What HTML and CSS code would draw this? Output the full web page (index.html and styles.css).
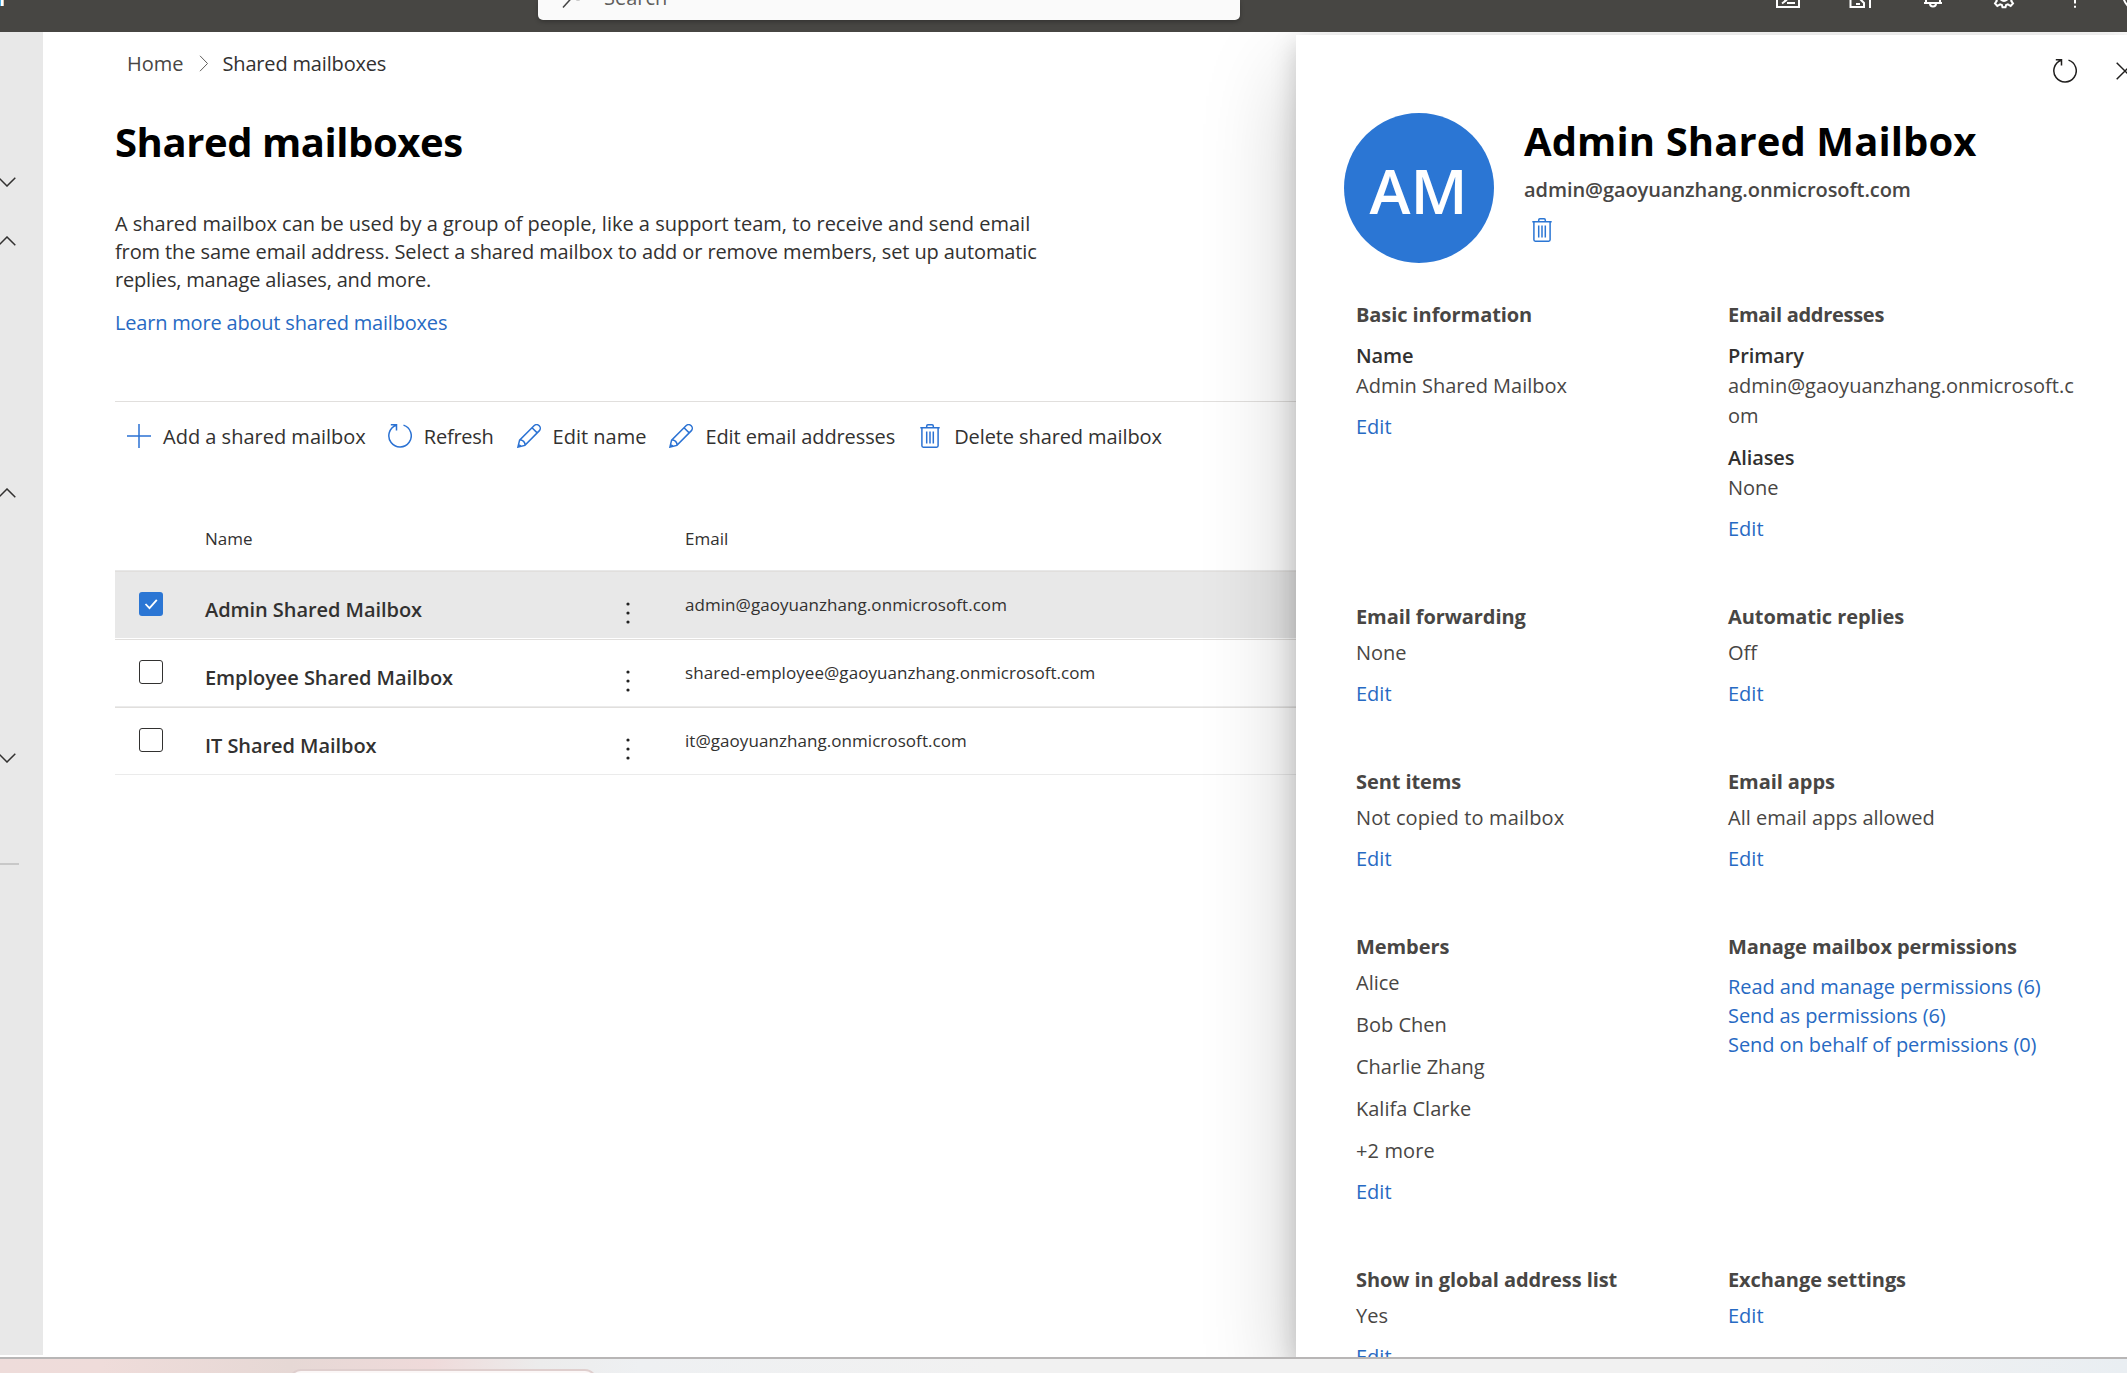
FILE: index.html
```html
<!DOCTYPE html>
<html lang="en">
<head>
<meta charset="utf-8">
<title>Shared mailboxes</title>
<link rel="stylesheet" href="styles.css">
</head>
<body>
<svg class="sprite" aria-hidden="true">
  <symbol id="refresh" viewBox="0 0 24 24"><path d="M15.500 1.100a11.200 11.200 0 1 1-7.200.1M2.800.8h5.700v5.700" /></symbol>
  <symbol id="pencil" viewBox="0 0 24 24"><path d="M.9 23.100l1.700-7L17 1.700a3.600 3.600 0 0 1 5.200 5.200L7.900 21.400zM2.600 16.100a4.600 4.600 0 0 1 5.300 5.300M15 3.700l5.200 5.200M1.600 20.200l2.200 2.200"/></symbol>
  <symbol id="trash" viewBox="0 0 20 24"><path d="M.3 3.700h19.400M1.900 3.700v18.100q0 1.400 1.400 1.400h13.400q1.400 0 1.400-1.400V3.700M6.700 3.700V2q0-1.200 1.200-1.200h4.200q1.200 0 1.200 1.200v1.700M6.700 7.500v12M10 7.500v12M13.300 7.500v12"/></symbol>
  <symbol id="chevron" viewBox="0 0 18 10"><path d="M.7.7L9 9 17.300.7"/></symbol>
  <symbol id="more" viewBox="0 0 4 24"><circle cx="2" cy="3" r="1.600"/><circle cx="2" cy="12" r="1.600"/><circle cx="2" cy="21" r="1.600"/></symbol>
</svg>
<div class="screen">
  <header class="topbar">
    <span class="brand"></span>
    <div class="search">
      <svg class="search-icon" viewBox="0 0 24 24"><circle cx="16" cy="7.500" r="8"/><path d="M10.400 13.100L1 23.500"/></svg>
      <span class="search-text">Search</span>
    </div>
    <div class="top-icons">
      <svg viewBox="0 0 24 24"><path d="M1 3v20h22V3M5 12.500l5 4-4 3M11 19h8"/></svg>
      <svg viewBox="0 0 24 24"><path d="M2.500 3v20h13.500v-4l-4-4 3-4M22 3v21M8 20h4"/></svg>
      <svg viewBox="0 0 24 24"><path d="M6 19V9a7 7 0 0 1 14 0v10M4 19h18M10 19.500a3 3 0 0 0 6 0"/></svg>
      <svg viewBox="0 0 24 24"><path d="M1 11v3.200l3 .6.8 2L3 19.500 5.300 22l2.800-1.700 1.800.7.600 2.300h3l.6-2.300 1.800-.7 2.800 1.700 2.300-2.500-1.800-2.700.8-2 3-.6V11"/><circle cx="12" cy="13" r="4"/></svg>
      <svg viewBox="0 0 24 24"><path d="M6 6a5 5 0 1 1 7 5q-2 1-2 4v4.500M11 21.800v2"/></svg>
      <svg viewBox="0 0 24 24"><circle cx="4" cy="10" r="17"/></svg>
    </div>
  </header>

  <div class="workspace">
    <nav class="rail">
      <svg class="rail-chevron c1"><use href="#chevron"/></svg>
      <svg class="rail-chevron c2 up"><use href="#chevron"/></svg>
      <svg class="rail-chevron c3 up"><use href="#chevron"/></svg>
      <svg class="rail-chevron c4"><use href="#chevron"/></svg>
      <hr class="rail-rule">
    </nav>

    <main class="content">
      <div class="crumbs">
        <a>Home</a>
        <svg class="crumb-sep" viewBox="0 0 10 17"><path d="M1 .8l7.500 7.700L1 16.200"/></svg>
        <span class="crumb-here">Shared mailboxes</span>
      </div>
      <h1 class="title">Shared mailboxes</h1>
      <p class="intro">
        <span class="l1">A shared mailbox can be used by a group of people, like a support team, to receive and send email</span>
        <span class="l2">from the same email address. Select a shared mailbox to add or remove members, set up automatic</span>
        <span class="l3">replies, manage aliases, and more.</span>
      </p>
      <a class="learn">Learn more about shared mailboxes</a>

      <div class="toolbar">
        <div class="tool add"><svg class="ico24" viewBox="0 0 24 24"><path d="M12 0v24M0 12h24"/></svg><span>Add a shared mailbox</span></div>
        <div class="tool reload"><svg class="ico24"><use href="#refresh"/></svg><span>Refresh</span></div>
        <div class="tool"><svg class="ico24"><use href="#pencil"/></svg><span>Edit name</span></div>
        <div class="tool"><svg class="ico24"><use href="#pencil"/></svg><span class="tight">Edit email addresses</span></div>
        <div class="tool"><svg class="ico24"><use href="#trash"/></svg><span class="tight">Delete shared mailbox</span></div>
      </div>

      <div class="grid-head"><span class="h-name">Name</span><span class="h-email">Email</span></div>
      <div class="row selected">
        <span class="check on"><svg viewBox="0 0 24 24"><path d="M6.500 12l4 4.200 7.300-8.400"/></svg></span>
        <span class="name">Admin Shared Mailbox</span>
        <svg class="more"><use href="#more"/></svg>
        <span class="mail">admin@gaoyuanzhang.onmicrosoft.com</span>
      </div>
      <div class="row after-selected">
        <span class="check"></span>
        <span class="name">Employee Shared Mailbox</span>
        <svg class="more"><use href="#more"/></svg>
        <span class="mail">shared-employee@gaoyuanzhang.onmicrosoft.com</span>
      </div>
      <div class="row last">
        <span class="check"></span>
        <span class="name">IT Shared Mailbox</span>
        <svg class="more"><use href="#more"/></svg>
        <span class="mail">it@gaoyuanzhang.onmicrosoft.com</span>
      </div>
    </main>

    <aside class="panel">
      <div class="panel-actions">
        <svg class="ico24"><use href="#refresh"/></svg>
        <svg class="close" viewBox="0 0 18 18"><path d="M.7.7l16.600 16.600M17.300.7L.7 17.300"/></svg>
      </div>
      <div class="persona">
        <div class="avatar"><span>AM</span></div>
        <div class="persona-text">
          <h2 class="persona-name">Admin Shared Mailbox</h2>
          <div class="persona-mail">admin@gaoyuanzhang.onmicrosoft.com</div>
          <svg class="ico20 persona-trash"><use href="#trash"/></svg>
        </div>
      </div>
      <div class="details">
        <section>
          <h3>Basic information</h3>
          <h4>Name</h4>
          <p class="under">Admin Shared Mailbox</p>
          <a>Edit</a>
        </section>
        <section>
          <h3 class="narrow">Email addresses</h3>
          <h4>Primary</h4>
          <p class="under">admin@gaoyuanzhang.onmicrosoft.c<br>om</p>
          <h4>Aliases</h4>
          <p class="under">None</p>
          <a>Edit</a>
        </section>
        <section><h3>Email forwarding</h3><p>None</p><a>Edit</a></section>
        <section><h3>Automatic replies</h3><p>Off</p><a>Edit</a></section>
        <section><h3>Sent items</h3><p class="wide">Not copied to mailbox</p><a>Edit</a></section>
        <section><h3>Email apps</h3><p>All email apps allowed</p><a>Edit</a></section>
        <section>
          <h3>Members</h3>
          <p>Alice</p><p>Bob Chen</p><p>Charlie Zhang</p><p>Kalifa Clarke</p><p class="wide">+2 more</p>
          <a>Edit</a>
        </section>
        <section>
          <h3>Manage mailbox permissions</h3>
          <div class="links"><a>Read and manage permissions (6)</a><a>Send as permissions (6)</a><a>Send on behalf of permissions (0)</a></div>
        </section>
        <section><h3>Show in global address list</h3><p>Yes</p><a>Edit</a></section>
        <section><h3>Exchange settings</h3><a class="direct">Edit</a></section>
      </div>
    </aside>
  </div>
  <footer class="taskbar"><div class="task-search"></div></footer>
</div>
</body>
</html>
```

FILE: styles.css
```css
* { box-sizing: border-box; }
body { margin: 0; font-family: "Open Sans", "Noto Sans", sans-serif; font-size: 20px; line-height: 28px; color: #323130; background: #fff; }
h1, h2, h3, h4, p { margin: 0; }
svg { fill: none; stroke: currentColor; stroke-width: 1.5; overflow: visible; display: block; flex: none; }
.sprite { width: 0; height: 0; position: absolute; }
.screen { width: 2127px; height: 1373px; display: flex; flex-direction: column; overflow: hidden; }
a { color: #276ac3; white-space: nowrap; }
.ico24 { width: 24px; height: 24px; }
.ico20 { width: 20px; height: 24px; }

.topbar { height: 32px; flex: none; background: #474643; display: flex; position: relative; z-index: 3; color: #fff; overflow: hidden; }
.brand { flex: none; width: 4px; height: 6px; margin-right: 534px; background: linear-gradient(90deg, #4aaee8 1px, #fff 1px, #fff 3px, #e0c4a8 3px); }
.search { flex: none; width: 702px; height: 20px; background: #fafafa; border-radius: 0 0 5px 5px; display: flex; align-items: flex-end; color: #605e5c; box-shadow: 0 2px 4px rgba(0,0,0,.25); overflow: hidden; }
.search-icon { width: 24px; height: 24px; margin: 0 18px 12px 24px; color: #444; }
.search-text { line-height: 28px; margin: 0 0 8px; }
.top-icons { display: flex; flex: none; gap: 48px; margin: -16px 0 0 536px; }
.top-icons svg { width: 24px; height: 24px; stroke-width: 2; }

.workspace { height: 1325px; flex: none; display: flex; overflow: hidden; }
.rail { width: 43px; height: 1323px; flex: none; background: #e8e8e8; display: flex; flex-direction: column; color: #323130; }
.rail-chevron { width: 18px; height: 10px; margin-left: -2px; }
.rail-chevron.up { transform: rotate(180deg); }
.c1 { margin-top: 145px; }
.c2 { margin-top: 49px; }
.c3 { margin-top: 242px; }
.c4 { margin-top: 255px; }
.rail-rule { width: 19px; height: 2px; margin: 100px 0 0; border: 0; background: #c8c8c8; }

.content { width: 1253px; flex: none; padding-left: 72px; }
.crumbs { display: flex; align-items: center; height: 28px; margin: 18px 0 0 12px; }
.crumbs a { color: #484644; }
.crumb-here { letter-spacing: -.17px; }
.crumb-sep { width: 10px; height: 17px; margin: 0 14px 2px 15px; stroke-width: 1; color: #605e5c; }
.title { font-size: 40px; line-height: 54px; font-weight: 700; color: #000; margin-top: 37px; letter-spacing: -.43px; }
.intro { margin-top: 41px; }
.intro span { display: block; white-space: nowrap; }
.intro .l1 { letter-spacing: -.01px; }
.intro .l2 { letter-spacing: -.11px; }
.intro .l3 { letter-spacing: -.18px; }
.learn { display: block; margin-top: 15px; letter-spacing: -.19px; }

.toolbar { height: 68px; margin-top: 64px; padding-left: 12px; border-top: 1px solid #e1dfdd; display: flex; align-items: center; gap: 23px; }
.tool { display: flex; align-items: center; color: #2b72d3; white-space: nowrap; }
.tool span { color: #323130; margin: 2px 0 0 12px; }
.tool.add span { margin-right: -1px; }
.tool.reload span { letter-spacing: -.25px; }
.tool .tight { letter-spacing: -.1px; }
.grid-head { height: 101px; padding-top: 56px; display: flex; font-size: 17px; }
.h-name { margin-left: 90px; width: 480px; }
.row { height: 68px; border-top: 1px solid #ebebeb; box-shadow: inset 0 1px #e1dfdd; display: flex; }
.row.selected { background: #e8e8e8; border-color: #e8e8e8; }
.row.after-selected { border-color: #fff; }
.row.last { height: 69px; border-bottom: 1px solid #ebebeb; }
.check { width: 24px; height: 24px; margin: 21px 0 0 24px; border: 1.5px solid #323130; border-radius: 3px; flex: none; }
.check.on { background: #2b76d4; border: 0; color: #fff; }
.check svg { stroke-width: 1.8; }
.name { width: 421px; margin: 25px 0 0 42px; font-weight: 600; letter-spacing: -.06px; }
.more { width: 4px; height: 24px; margin-top: 30px; fill: #222; stroke: none; }
.mail { margin: 20px 0 0 55px; font-size: 17px; letter-spacing: .06px; }

.panel { flex: 1; min-width: 0; margin-top: 3px; background: #fff; position: relative; z-index: 2; box-shadow: 0 38px 86px rgba(0,0,0,.22), 0 8px 24px rgba(0,0,0,.18); overflow: hidden; color: #484644; }
.panel-actions { display: flex; height: 48px; padding-top: 24px; align-items: center; margin-left: 757px; gap: 39px; color: #201f1e; }
.close { width: 18px; height: 18px; }
.persona { display: flex; margin: 30px 0 0 48px; height: 150px; }
.avatar { width: 150px; height: 150px; border-radius: 50%; background: #2b76d4; color: #fff; font-size: 62px; font-weight: 600; line-height: 155px; text-align: center; flex: none; }
.avatar span { margin-right: 1px; }
.persona-text { margin-left: 30px; padding-top: 1px; }
.persona-name { font-size: 40px; line-height: 54px; color: #000; white-space: nowrap; letter-spacing: .1px; }
.persona-mail { font-weight: 600; margin-top: 8px; letter-spacing: -.07px; }
.persona-trash { color: #2b76d4; margin: 14px 0 0 8px; }
.details { display: grid; grid-template-columns: 372px 380px; row-gap: 58px; margin: 37px 0 0 60px; }
h3, h4 { font-size: 20px; line-height: 30px; font-weight: 700; color: #484644; white-space: nowrap; letter-spacing: -.08px; }
h3.narrow { letter-spacing: -.28px; }
h4 { font-weight: 600; color: #323130; padding-top: 11px; }
p + h4 { padding-top: 12px; }
.details p, .details a { display: block; line-height: 30px; white-space: nowrap; }
.details p { padding: 6px 0; }
.details p.wide { letter-spacing: .12px; }
.details p.under { padding: 0; }
.details p + a { padding-top: 5px; }
.details p.under + a { padding-top: 11px; }
.details a.direct { padding-top: 6px; }
.links { padding-top: 10px; letter-spacing: -.07px; }
.details .links a { line-height: 29px; }

.taskbar { height: 16px; border-top: 2px solid #b8b6b6; background: linear-gradient(90deg, #eedcda 0, #efdcda 100px, #e6d8d5 290px, #efdada 430px, #ececec 540px, #eef0f2 640px, #f1f1f1 1000px, #f1f1f1 1800px, #e9eef2 100%); overflow: hidden; }
.task-search { width: 308px; height: 30px; margin: 10px 0 0 289px; border: 2px solid #dfcfce; border-radius: 12px; background: #fbf7f7; }
```
